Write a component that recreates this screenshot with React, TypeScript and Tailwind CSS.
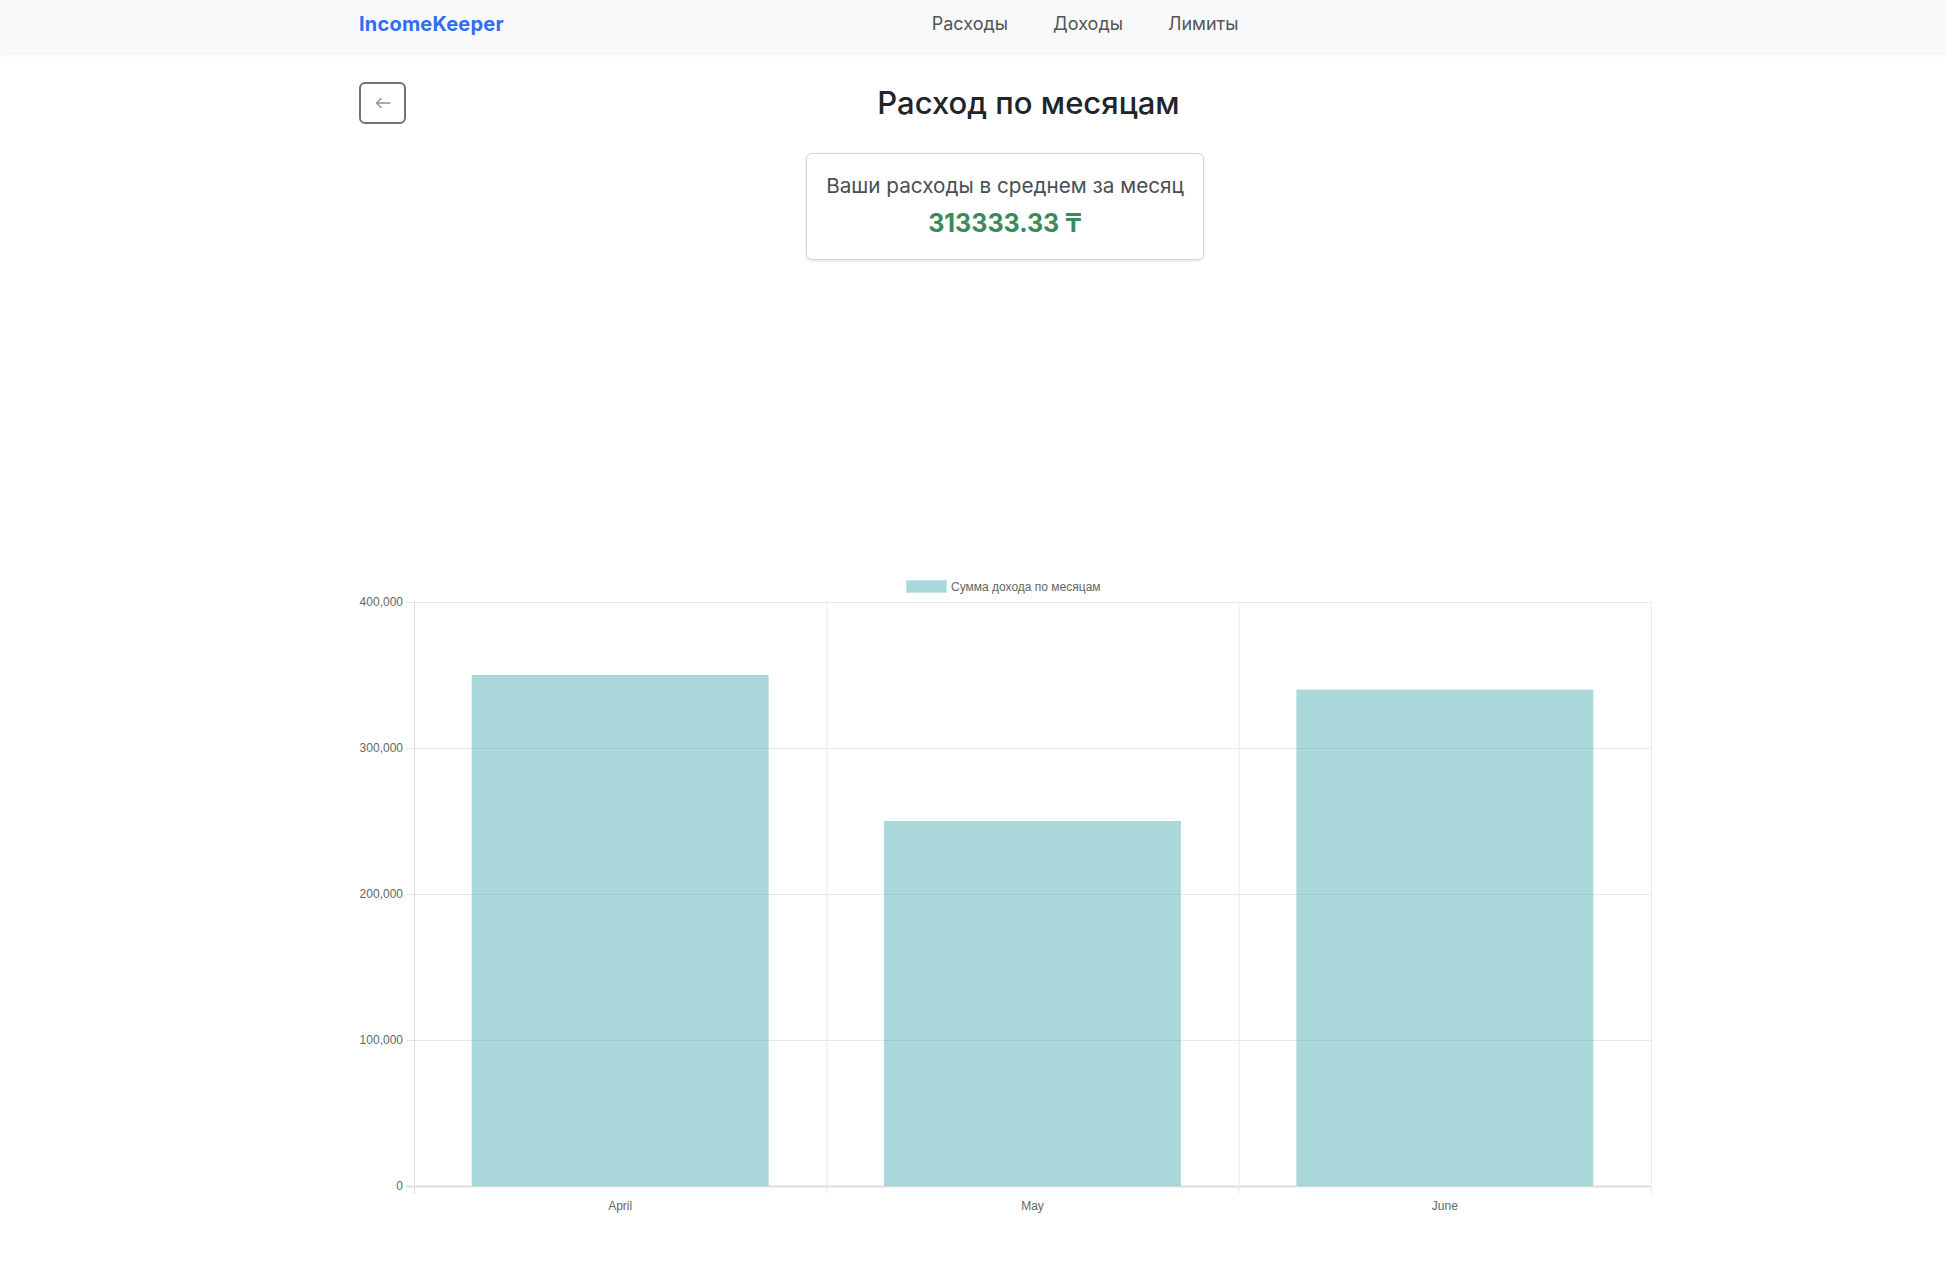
import React from "react";

const bars = [
  { label: "April", value: 350000 },
  { label: "May", value: 250000 },
  { label: "June", value: 340000 },
];

function Chart() {
  // coords relative to page x=359, y=570
  const left = 55;
  const right = 1292;
  const top = 32;
  const bottom = 616;
  const cat = (right - left) / 3;
  const bw = cat * 0.72;
  const ticks = [400000, 300000, 200000, 100000, 0];
  const yOf = (v: number) => bottom - (v / 400000) * (bottom - top);
  return (
    <svg width={1300} height={660} className="block" style={{ fontFamily: '"Liberation Sans", Arial, sans-serif' }}>
      {/* legend */}
      <rect x={547.5} y={10.5} width={40} height={12} fill="#a8d8da" stroke="#c4e6e7" strokeWidth={1} />
      <text x={592} y={21} fontSize={12} fill="#666">
        Сумма дохода по месяцам
      </text>
      {/* horizontal grid */}
      {ticks.map((t) => (
        <g key={t}>
          <line
            x1={47}
            x2={right}
            y1={yOf(t) + 0.5}
            y2={yOf(t) + 0.5}
            stroke={t === 0 ? "#dedede" : "#e8e8e8"}
            strokeWidth={t === 0 ? 2 : 1}
          />
          <text x={44} y={yOf(t) + 4} fontSize={12} fill="#666" textAnchor="end">
            {t.toLocaleString("en-US")}
          </text>
        </g>
      ))}
      {/* vertical grid */}
      {[0, 1, 2, 3].map((i) => (
        <line
          key={i}
          x1={left + cat * i + 0.5}
          x2={left + cat * i + 0.5}
          y1={top}
          y2={624}
          stroke={i === 0 ? "#dcdcdc" : "#ebebeb"}
          strokeWidth={1}
        />
      ))}
      {/* bars */}
      {bars.map((b, i) => {
        const x = left + cat * i + (cat - bw) / 2;
        const y = yOf(b.value);
        return (
          <g key={b.label}>
            <rect x={x} y={y} width={bw} height={bottom - y} fill="rgba(75,172,176,0.47)" />
            <text x={left + cat * i + cat / 2} y={640} fontSize={12} fill="#666" textAnchor="middle">
              {b.label}
            </text>
          </g>
        );
      })}
    </svg>
  );
}

export default function App() {
  return (
    <div className="min-h-screen bg-white" style={{ fontFamily: 'Inter, "Noto Sans", sans-serif' }}>
      <header className="h-[53px] bg-[#f8f9fa] shadow-[0_2px_4px_rgba(0,0,0,0.06)] flex items-center pb-[6px]">
        <div className="ml-[359px] flex items-center">
          <span className="text-[20px] font-bold text-[#2f6df6] tracking-[0.2px]">IncomeKeeper</span>
          <nav className="ml-[428px] flex gap-[45px] text-[18px] text-[#555]">
            <span>Расходы</span>
            <span>Доходы</span>
            <span>Лимиты</span>
          </nav>
        </div>
      </header>
      <main className="ml-[359px] w-[1292px]">
        <div className="mt-[29px] flex items-center">
          <button className="w-[47px] h-[42px] rounded-[6px] border-2 border-[#6c757d] flex items-center justify-center">
            <svg width="16" height="12" viewBox="0 0 16 12" fill="none" stroke="#8a9096" strokeWidth="1.3" strokeLinecap="round" strokeLinejoin="round">
              <path d="M15 6H1.5M6 1.5L1.5 6L6 10.5" />
            </svg>
          </button>
          <h1 className="flex-1 text-center text-[31px] font-medium text-[#212529] leading-none pb-[2px]">Расход по месяцам</h1>
        </div>
        <div className="mt-[29px] flex justify-center">
          <div className="w-[398px] h-[107px] rounded-[6px] border border-[#d3d6d9] shadow-[0_1px_3px_rgba(0,0,0,0.12)] flex flex-col items-center pt-[18px]">
            <div className="text-[20.7px] text-[#4a4f54] leading-[28px]">Ваши расходы в среднем за месяц</div>
            <div className="text-[25px] font-bold text-[#3b8a5a] leading-[30px] mt-[8px]">313333.33 ₸</div>
          </div>
        </div>
        <div className="mt-[310px]">
          <Chart />
        </div>
      </main>
    </div>
  );
}
